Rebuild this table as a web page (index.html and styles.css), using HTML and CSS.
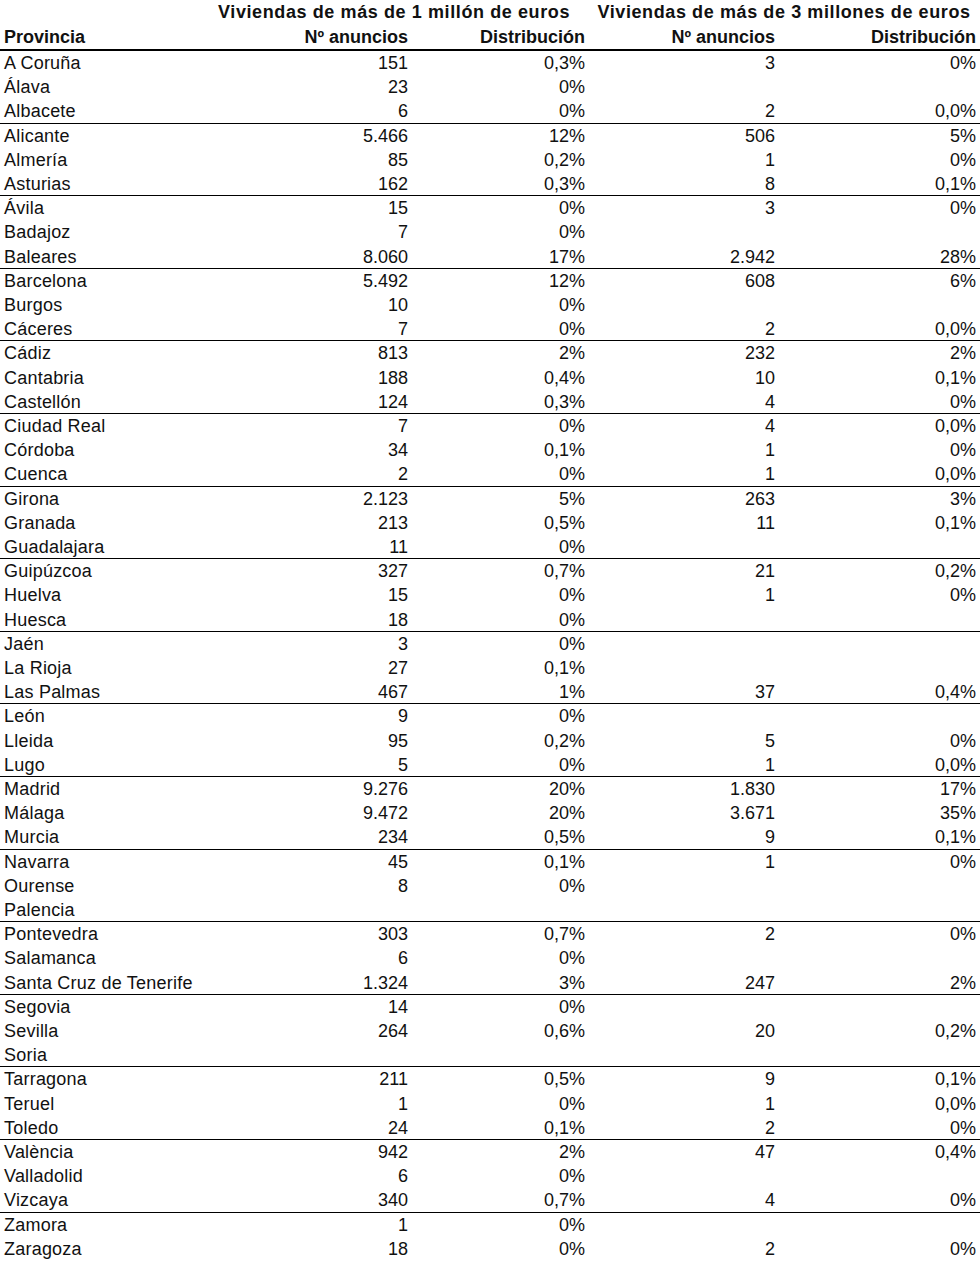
FILE: index.html
```html
<!DOCTYPE html>
<html lang="es">
<head>
<meta charset="utf-8">
<title>Viviendas de lujo por provincia</title>
<link rel="stylesheet" href="styles.css">
</head>
<body>
<div class="sheet">
  <div class="head">
    <div class="hrow top">
      <div class="c0"></div>
      <div class="grp-title g1">Viviendas de más de 1 millón de euros</div>
      <div class="grp-title g2">Viviendas de más de 3 millones de euros</div>
    </div>
    <div class="hrow">
      <div class="c0 b">Provincia</div>
      <div class="c1 b">Nº anuncios</div>
      <div class="c2 b">Distribución</div>
      <div class="c3 b">Nº anuncios</div>
      <div class="c4 b">Distribución</div>
    </div>
  </div>

  <div class="grp">
    <div class="row"><div class="c0">A Coruña</div><div class="c1 n">151</div><div class="c2 n">0,3%</div><div class="c3 n">3</div><div class="c4 n">0%</div></div>
    <div class="row"><div class="c0">Álava</div><div class="c1 n">23</div><div class="c2 n">0%</div><div class="c3 n"></div><div class="c4 n"></div></div>
    <div class="row"><div class="c0">Albacete</div><div class="c1 n">6</div><div class="c2 n">0%</div><div class="c3 n">2</div><div class="c4 n">0,0%</div></div>
  </div>
  <div class="grp">
    <div class="row"><div class="c0">Alicante</div><div class="c1 n">5.466</div><div class="c2 n">12%</div><div class="c3 n">506</div><div class="c4 n">5%</div></div>
    <div class="row"><div class="c0">Almería</div><div class="c1 n">85</div><div class="c2 n">0,2%</div><div class="c3 n">1</div><div class="c4 n">0%</div></div>
    <div class="row"><div class="c0">Asturias</div><div class="c1 n">162</div><div class="c2 n">0,3%</div><div class="c3 n">8</div><div class="c4 n">0,1%</div></div>
  </div>
  <div class="grp">
    <div class="row"><div class="c0">Ávila</div><div class="c1 n">15</div><div class="c2 n">0%</div><div class="c3 n">3</div><div class="c4 n">0%</div></div>
    <div class="row"><div class="c0">Badajoz</div><div class="c1 n">7</div><div class="c2 n">0%</div><div class="c3 n"></div><div class="c4 n"></div></div>
    <div class="row"><div class="c0">Baleares</div><div class="c1 n">8.060</div><div class="c2 n">17%</div><div class="c3 n">2.942</div><div class="c4 n">28%</div></div>
  </div>
  <div class="grp">
    <div class="row"><div class="c0">Barcelona</div><div class="c1 n">5.492</div><div class="c2 n">12%</div><div class="c3 n">608</div><div class="c4 n">6%</div></div>
    <div class="row"><div class="c0">Burgos</div><div class="c1 n">10</div><div class="c2 n">0%</div><div class="c3 n"></div><div class="c4 n"></div></div>
    <div class="row"><div class="c0">Cáceres</div><div class="c1 n">7</div><div class="c2 n">0%</div><div class="c3 n">2</div><div class="c4 n">0,0%</div></div>
  </div>
  <div class="grp">
    <div class="row"><div class="c0">Cádiz</div><div class="c1 n">813</div><div class="c2 n">2%</div><div class="c3 n">232</div><div class="c4 n">2%</div></div>
    <div class="row"><div class="c0">Cantabria</div><div class="c1 n">188</div><div class="c2 n">0,4%</div><div class="c3 n">10</div><div class="c4 n">0,1%</div></div>
    <div class="row"><div class="c0">Castellón</div><div class="c1 n">124</div><div class="c2 n">0,3%</div><div class="c3 n">4</div><div class="c4 n">0%</div></div>
  </div>
  <div class="grp">
    <div class="row"><div class="c0">Ciudad Real</div><div class="c1 n">7</div><div class="c2 n">0%</div><div class="c3 n">4</div><div class="c4 n">0,0%</div></div>
    <div class="row"><div class="c0">Córdoba</div><div class="c1 n">34</div><div class="c2 n">0,1%</div><div class="c3 n">1</div><div class="c4 n">0%</div></div>
    <div class="row"><div class="c0">Cuenca</div><div class="c1 n">2</div><div class="c2 n">0%</div><div class="c3 n">1</div><div class="c4 n">0,0%</div></div>
  </div>
  <div class="grp">
    <div class="row"><div class="c0">Girona</div><div class="c1 n">2.123</div><div class="c2 n">5%</div><div class="c3 n">263</div><div class="c4 n">3%</div></div>
    <div class="row"><div class="c0">Granada</div><div class="c1 n">213</div><div class="c2 n">0,5%</div><div class="c3 n">11</div><div class="c4 n">0,1%</div></div>
    <div class="row"><div class="c0">Guadalajara</div><div class="c1 n">11</div><div class="c2 n">0%</div><div class="c3 n"></div><div class="c4 n"></div></div>
  </div>
  <div class="grp">
    <div class="row"><div class="c0">Guipúzcoa</div><div class="c1 n">327</div><div class="c2 n">0,7%</div><div class="c3 n">21</div><div class="c4 n">0,2%</div></div>
    <div class="row"><div class="c0">Huelva</div><div class="c1 n">15</div><div class="c2 n">0%</div><div class="c3 n">1</div><div class="c4 n">0%</div></div>
    <div class="row"><div class="c0">Huesca</div><div class="c1 n">18</div><div class="c2 n">0%</div><div class="c3 n"></div><div class="c4 n"></div></div>
  </div>
  <div class="grp">
    <div class="row"><div class="c0">Jaén</div><div class="c1 n">3</div><div class="c2 n">0%</div><div class="c3 n"></div><div class="c4 n"></div></div>
    <div class="row"><div class="c0">La Rioja</div><div class="c1 n">27</div><div class="c2 n">0,1%</div><div class="c3 n"></div><div class="c4 n"></div></div>
    <div class="row"><div class="c0">Las Palmas</div><div class="c1 n">467</div><div class="c2 n">1%</div><div class="c3 n">37</div><div class="c4 n">0,4%</div></div>
  </div>
  <div class="grp">
    <div class="row"><div class="c0">León</div><div class="c1 n">9</div><div class="c2 n">0%</div><div class="c3 n"></div><div class="c4 n"></div></div>
    <div class="row"><div class="c0">Lleida</div><div class="c1 n">95</div><div class="c2 n">0,2%</div><div class="c3 n">5</div><div class="c4 n">0%</div></div>
    <div class="row"><div class="c0">Lugo</div><div class="c1 n">5</div><div class="c2 n">0%</div><div class="c3 n">1</div><div class="c4 n">0,0%</div></div>
  </div>
  <div class="grp">
    <div class="row"><div class="c0">Madrid</div><div class="c1 n">9.276</div><div class="c2 n">20%</div><div class="c3 n">1.830</div><div class="c4 n">17%</div></div>
    <div class="row"><div class="c0">Málaga</div><div class="c1 n">9.472</div><div class="c2 n">20%</div><div class="c3 n">3.671</div><div class="c4 n">35%</div></div>
    <div class="row"><div class="c0">Murcia</div><div class="c1 n">234</div><div class="c2 n">0,5%</div><div class="c3 n">9</div><div class="c4 n">0,1%</div></div>
  </div>
  <div class="grp">
    <div class="row"><div class="c0">Navarra</div><div class="c1 n">45</div><div class="c2 n">0,1%</div><div class="c3 n">1</div><div class="c4 n">0%</div></div>
    <div class="row"><div class="c0">Ourense</div><div class="c1 n">8</div><div class="c2 n">0%</div><div class="c3 n"></div><div class="c4 n"></div></div>
    <div class="row"><div class="c0">Palencia</div><div class="c1 n"></div><div class="c2 n"></div><div class="c3 n"></div><div class="c4 n"></div></div>
  </div>
  <div class="grp">
    <div class="row"><div class="c0">Pontevedra</div><div class="c1 n">303</div><div class="c2 n">0,7%</div><div class="c3 n">2</div><div class="c4 n">0%</div></div>
    <div class="row"><div class="c0">Salamanca</div><div class="c1 n">6</div><div class="c2 n">0%</div><div class="c3 n"></div><div class="c4 n"></div></div>
    <div class="row"><div class="c0">Santa Cruz de Tenerife</div><div class="c1 n">1.324</div><div class="c2 n">3%</div><div class="c3 n">247</div><div class="c4 n">2%</div></div>
  </div>
  <div class="grp">
    <div class="row"><div class="c0">Segovia</div><div class="c1 n">14</div><div class="c2 n">0%</div><div class="c3 n"></div><div class="c4 n"></div></div>
    <div class="row"><div class="c0">Sevilla</div><div class="c1 n">264</div><div class="c2 n">0,6%</div><div class="c3 n">20</div><div class="c4 n">0,2%</div></div>
    <div class="row"><div class="c0">Soria</div><div class="c1 n"></div><div class="c2 n"></div><div class="c3 n"></div><div class="c4 n"></div></div>
  </div>
  <div class="grp">
    <div class="row"><div class="c0">Tarragona</div><div class="c1 n">211</div><div class="c2 n">0,5%</div><div class="c3 n">9</div><div class="c4 n">0,1%</div></div>
    <div class="row"><div class="c0">Teruel</div><div class="c1 n">1</div><div class="c2 n">0%</div><div class="c3 n">1</div><div class="c4 n">0,0%</div></div>
    <div class="row"><div class="c0">Toledo</div><div class="c1 n">24</div><div class="c2 n">0,1%</div><div class="c3 n">2</div><div class="c4 n">0%</div></div>
  </div>
  <div class="grp">
    <div class="row"><div class="c0">València</div><div class="c1 n">942</div><div class="c2 n">2%</div><div class="c3 n">47</div><div class="c4 n">0,4%</div></div>
    <div class="row"><div class="c0">Valladolid</div><div class="c1 n">6</div><div class="c2 n">0%</div><div class="c3 n"></div><div class="c4 n"></div></div>
    <div class="row"><div class="c0">Vizcaya</div><div class="c1 n">340</div><div class="c2 n">0,7%</div><div class="c3 n">4</div><div class="c4 n">0%</div></div>
  </div>
  <div class="grp last">
    <div class="row"><div class="c0">Zamora</div><div class="c1 n">1</div><div class="c2 n">0%</div><div class="c3 n"></div><div class="c4 n"></div></div>
    <div class="row"><div class="c0">Zaragoza</div><div class="c1 n">18</div><div class="c2 n">0%</div><div class="c3 n">2</div><div class="c4 n">0%</div></div>
  </div>
</div>
</body>
</html>
```

FILE: styles.css
```css
html, body {
  margin: 0;
  padding: 0;
  background: #fff;
}

.sheet {
  width: 980px;
  font-family: "Liberation Sans", Arial, sans-serif;
  font-size: 18px;
  color: #111;
}

.head {
  border-bottom: 2px solid #000;
}

.hrow,
.row {
  display: grid;
  grid-template-columns: 200px 210px 178px 190px 202px;
  white-space: nowrap;
}

.hrow {
  height: 24.5px;
  line-height: 24.5px;
}

.hrow.top {
  grid-template-columns: 200px 388px 392px;
}

.grp-title {
  font-weight: bold;
  text-align: center;
  letter-spacing: 0.6px;
}

.b {
  font-weight: bold;
}

.grp {
  height: 72.6px;
  box-sizing: border-box;
  border-bottom: 1px solid #000;
}

.grp.last {
  height: 48.4px;
  border-bottom: 0;
}

.row {
  height: 24.2px;
  line-height: 24.2px;
}

.row .c0 {
  letter-spacing: 0.22px;
}

.c0 {
  padding-left: 4px;
}

.c1, .c2, .c3, .c4 {
  text-align: right;
}

.c1 { padding-right: 2px; }
.c2 { padding-right: 3px; }
.c3 { padding-right: 3px; }
.c4 { padding-right: 4px; }
```
